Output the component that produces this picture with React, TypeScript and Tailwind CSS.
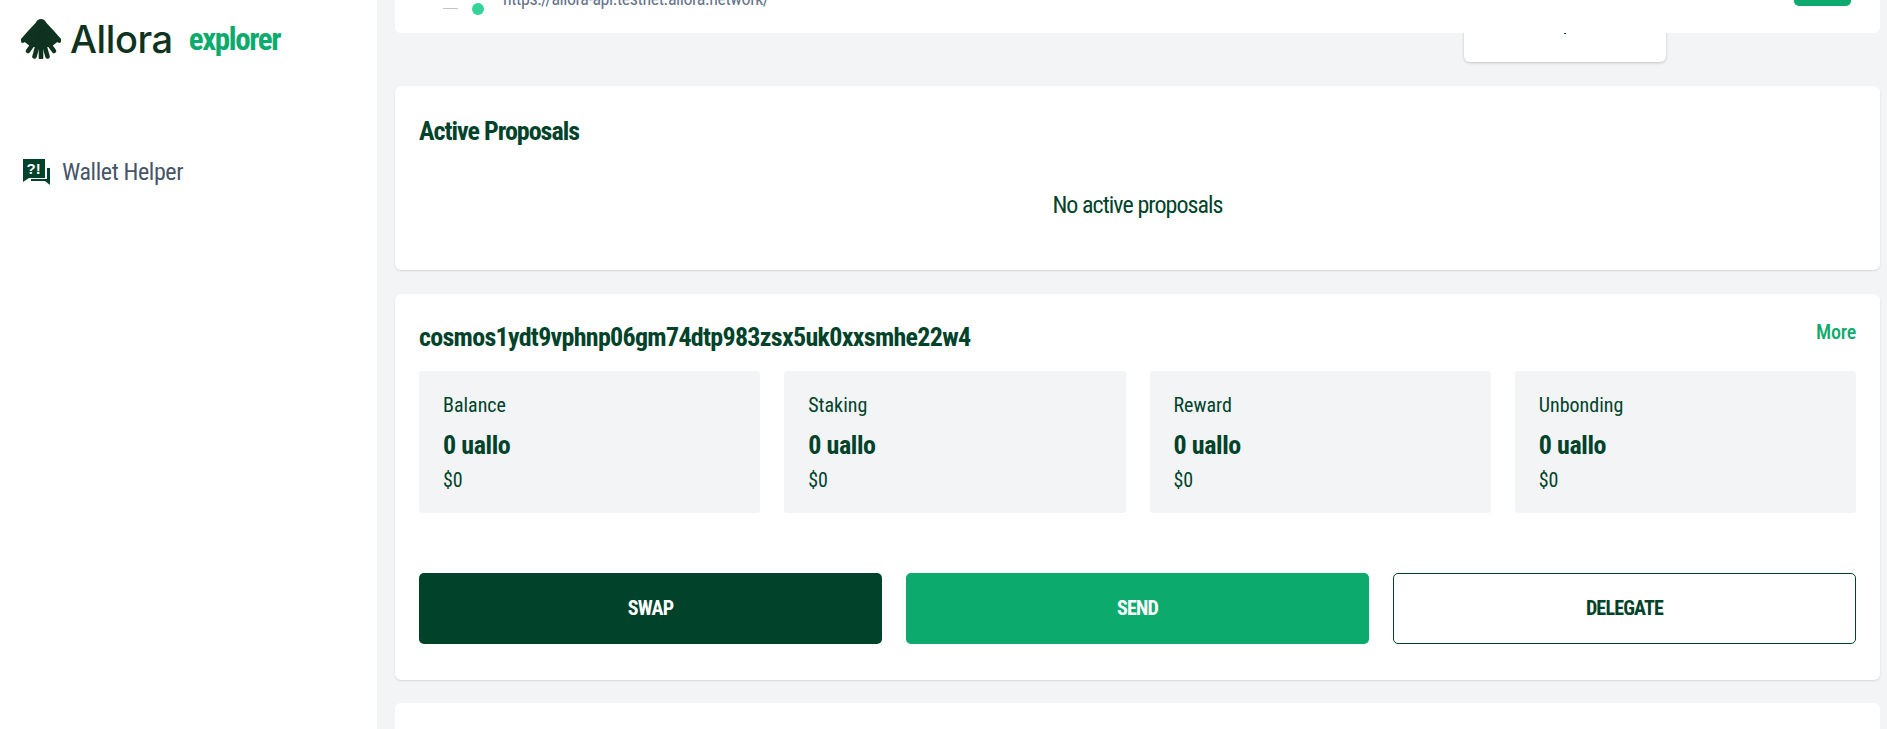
const FONT = "font-['Liberation_Sans_Narrow','Roboto_Condensed','Noto_Sans',sans-serif]";

const FINGERS = [
  [2, 21.5],
  [7, 32],
  [13.500, 37.500],
  [20, 38.500],
  [26.500, 37.500],
  [33, 32],
  [38, 21.500],
];

function AlloraMark() {
  return (
    <svg viewBox="0 0 40 40" className="w-10 h-10 shrink-0">
      <path d="M20 0c2.500 0 4 1.500 5.500 4L33 12l7 8-10 8H10L0 20l7-8 7.500-8C16 1.500 17.500 0 20 0z" fill="#0f3320" />
      {FINGERS.map(([x, y]) => (
        <line key={x} x1="20" y1="14" x2={x} y2={y} stroke="#0f3320" strokeWidth="4.600" strokeLinecap="round" />
      ))}
    </svg>
  );
}

function HelperIcon() {
  return (
    <svg viewBox="0 0 27 26" className="w-[27px] h-[26px] shrink-0">
      <path d="M0 0H22V19H6L0 23z" fill="#00432a" />
      <path d="M24 9h3v17l-5-4H8v-2H24z" fill="#00432a" />
      <text x="3.500" y="15" fontSize="15" fontWeight="700" fill="#fff" fontFamily="'Liberation Sans', sans-serif">?!</text>
    </svg>
  );
}

function Stat({ label }: { label: string }) {
  return (
    <div className="h-[142px] rounded-[3px] bg-[#f3f4f6] px-6 pt-[20px]">
      <div className="text-[20px] leading-[28px] text-[#00432a]">{label}</div>
      <div className="mt-[10px] text-[26px] leading-[32px] font-bold tracking-[-0.4px] text-[#00432a]">0 uallo</div>
      <div className="mt-[7px] text-[20px] leading-[25px] text-[#00432a]">$0</div>
    </div>
  );
}

export default function App() {
  return (
    <div className={`flex h-[729px] w-[1887px] overflow-hidden bg-[#f3f4f6] ${FONT}`}>
      <aside className="w-[377px] shrink-0 bg-white">
        <div className="flex items-center pl-[21px] pt-[17px]">
          <AlloraMark />
          <span className="ml-[9px] font-['Inter',sans-serif] text-[38px] leading-[40px] font-medium tracking-[-0.4px] text-[#0f3320]">Allora</span>
          <span className="ml-[16px] mt-[3px] text-[31px] leading-[40px] font-bold tracking-[-1.4px] text-[#0cab6d]">explorer</span>
        </div>
        <div className="mt-[95px] flex items-center pl-[23px]">
          <HelperIcon />
          <span className="ml-[12px] mt-[1px] text-[24px] leading-[32px] tracking-[-0.4px] text-[#475569]">Wallet Helper</span>
        </div>
      </aside>

      <main className="relative flex-1 pl-[18px] pr-[7px]">
        <div className="relative h-[33px] rounded-b-[6px] bg-white">
          <div className="absolute left-[48px] top-[8px] h-[1px] w-[15px] bg-[#c4c4c4]" />
          <div className="absolute left-[77px] top-[3px] h-[12px] w-[12px] rounded-full bg-[#34d399]" />
          <div className="absolute inset-0 overflow-hidden">
            <div className="absolute left-[108px] top-[-13px] text-[18px] leading-[24px] tracking-[-0.45px] text-[#64748b]">https://allora-api.testnet.allora.network/</div>
          </div>
          <div className="absolute right-[29px] top-0 h-[6px] w-[57px] rounded-b-[5px] bg-[#0cab6d]" />
        </div>
        <div className="absolute left-[1087px] top-0 flex h-[62px] w-[202px] items-end justify-center rounded-b-[6px] bg-white pb-[28px] shadow-[0_1px_3px_rgba(0,0,0,0.2)] [clip-path:inset(33px_-10px_-10px_-10px)]">
          <span className="h-[2px] w-[2px] bg-[#00432a]" />
        </div>

        <section className="mt-[53px] h-[184px] rounded-[6px] bg-white px-6 pt-[28px] shadow-[0_1px_2px_rgba(0,0,0,0.12)]">
          <h2 className="text-[26px] leading-[34px] font-bold tracking-[-1px] text-[#00432a]">Active Proposals</h2>
          <p className="mt-[41px] text-center text-[24px] leading-[32px] tracking-[-0.95px] text-[#00432a]">No active proposals</p>
        </section>

        <section className="mt-[24px] h-[386px] rounded-[6px] bg-white px-6 pt-[26px] shadow-[0_1px_2px_rgba(0,0,0,0.12)]">
          <div className="flex h-[34px] items-start justify-between">
            <h2 className="text-[26px] leading-[34px] font-bold tracking-[-0.7px] text-[#00432a]">cosmos1ydt9vphnp06gm74dtp983zsx5uk0xxsmhe22w4</h2>
            <a className="-mt-[2px] text-[20px] leading-[28px] font-medium tracking-[-0.2px] text-[#0cab6d]">More</a>
          </div>
          <div className="mt-[17px] grid grid-cols-4 gap-6">
            <Stat label="Balance" />
            <Stat label="Staking" />
            <Stat label="Reward" />
            <Stat label="Unbonding" />
          </div>
          <div className="mt-[60px] grid grid-cols-3 gap-6">
            <button className="h-[71px] rounded-[5px] bg-[#00432a] pb-[2px] text-[20px] font-bold tracking-[-0.8px] text-white">SWAP</button>
            <button className="h-[71px] rounded-[5px] bg-[#0cab6d] pb-[2px] text-[20px] font-bold tracking-[-0.8px] text-white">SEND</button>
            <button className="h-[71px] rounded-[5px] border border-[#00432a] bg-white pb-[2px] text-[20px] font-bold tracking-[-0.8px] text-[#00432a]">DELEGATE</button>
          </div>
        </section>

        <section className="mt-[23px] h-[100px] rounded-[6px] bg-white" />
      </main>
    </div>
  );
}
